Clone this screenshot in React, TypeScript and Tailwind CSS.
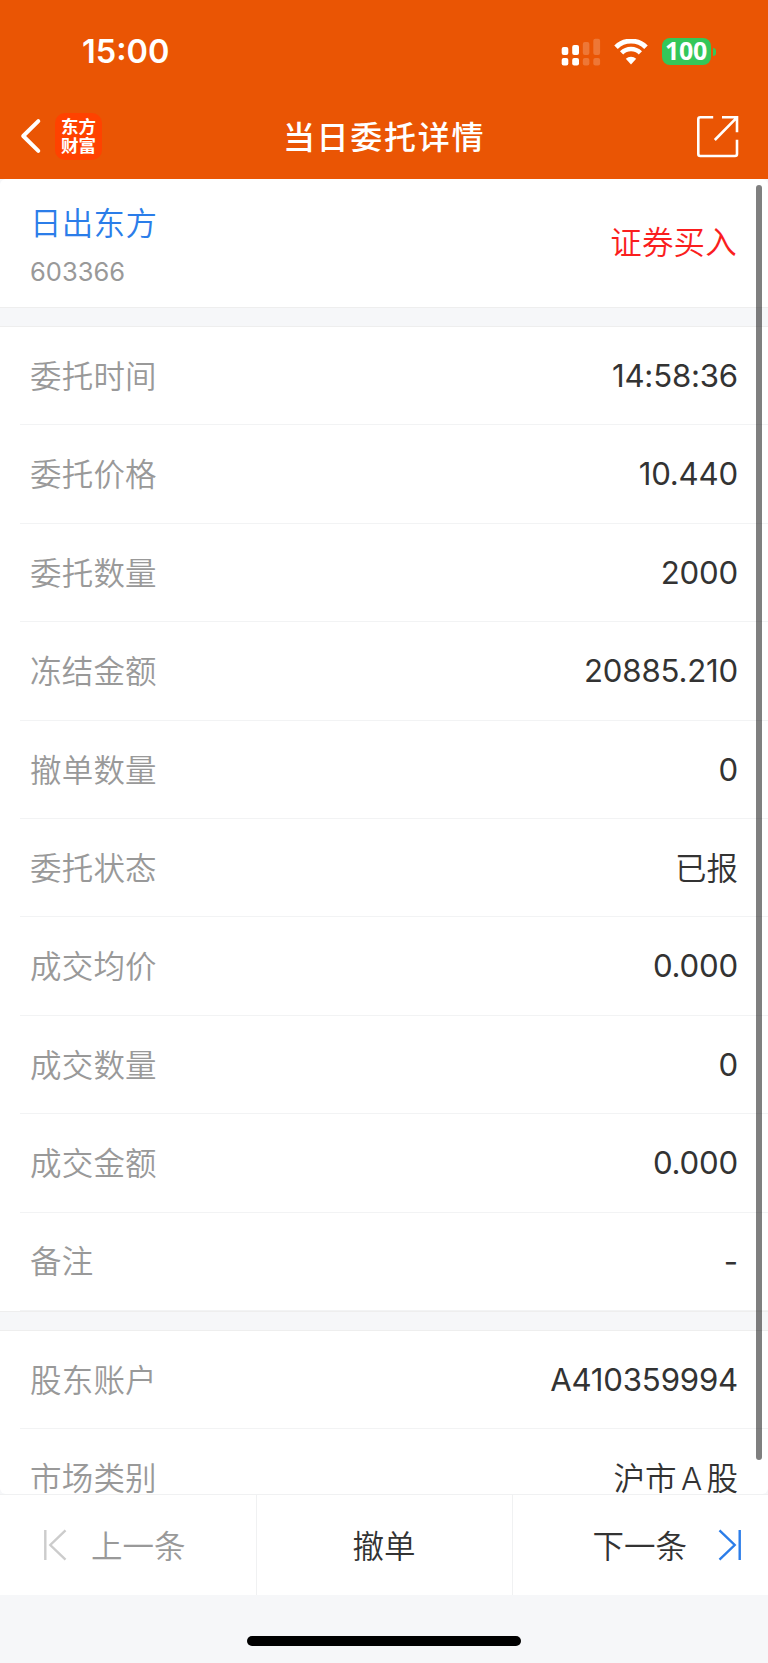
type Row = {
    label: string;
    value: string;
    isText?: boolean;
};

const orderRows: Row[] = [
    { label: "委托时间", value: "14:58:36" },
    { label: "委托价格", value: "10.440" },
    { label: "委托数量", value: "2000" },
    { label: "冻结金额", value: "20885.210" },
    { label: "撤单数量", value: "0" },
    { label: "委托状态", value: "已报", isText: true },
    { label: "成交均价", value: "0.000" },
    { label: "成交数量", value: "0" },
    { label: "成交金额", value: "0.000" },
    { label: "备注", value: "-" },
];

const accountRows: Row[] = [
    { label: "股东账户", value: "A410359994" },
    { label: "市场类别", value: "沪市 A 股", isText: true },
];

const StatusBar = () => (
    <div className="flex h-[103px] items-center justify-between pl-[82px] pr-[52px] text-white">
        <span className="pt-[2px] text-[32.5px] font-semibold leading-none">15:00</span>
        <div className="flex items-center">
            {/* Dual SIM signal */}
            <svg width="40" height="28" viewBox="0 0 40 28" fill="currentColor">
                <rect x="0.7" y="9" width="6.6" height="8" rx="2" />
                <rect x="11.2" y="7" width="6.8" height="10" rx="2" />
                <rect x="21.8" y="4" width="6.6" height="13" rx="2" opacity="0.2" />
                <rect x="32.3" y="0.8" width="6.8" height="16.2" rx="2" opacity="0.2" />
                <rect x="0.7" y="20" width="6.6" height="7.6" rx="2" />
                <rect x="11.2" y="20" width="6.8" height="7.6" rx="2" />
                <rect x="21.8" y="20" width="6.6" height="7.6" rx="2" opacity="0.2" />
                <rect x="32.3" y="20" width="6.8" height="7.6" rx="2" opacity="0.2" />
            </svg>
            {/* Wifi */}
            <svg className="ml-[13px]" width="34" height="26" viewBox="0 0 34 26" fill="none">
                <path d="M2 8.2A21.5 21.5 0 0 1 32 8.2" stroke="currentColor" strokeWidth="5" />
                <path d="M7.6 13.9A13.4 13.4 0 0 1 26.4 13.9" stroke="currentColor" strokeWidth="4.6" />
                <path d="M17 25.4 11.8 19.8A7.4 7.4 0 0 1 22.2 19.8Z" fill="currentColor" />
            </svg>
            {/* Battery */}
            <div className="ml-[14px] flex h-[27px] w-[49px] items-center justify-center rounded-[8px] bg-[#34c759] pr-px font-['Noto_Sans'] text-[25px] font-bold leading-none tracking-[-0.3px]">
                <span className="-mt-[2px]">100</span>
            </div>
            <div className="ml-[2px] h-[8px] w-[3px] rounded-r-full bg-[#34c759]" />
        </div>
    </div>
);

const NavBar = () => (
    <div className="grid h-[66px] grid-cols-[1fr_auto_1fr] items-center pl-5 pr-[29px] text-white">
        <div className="flex items-center">
            <svg width="22" height="36" viewBox="0 0 22 36" fill="none">
                <path d="M18.3 3.1 3.2 18l15.1 14.9" stroke="currentColor" strokeWidth="4" strokeLinecap="round" strokeLinejoin="round" />
            </svg>
            <div className="ml-[13px] flex h-[47px] w-[47px] flex-col items-center justify-center rounded-[10px] bg-[#ff4200] text-[17.5px] font-bold leading-[19px]">
                <span>东方</span>
                <span>财富</span>
            </div>
        </div>
        <h1 className="pl-[9px] pt-[3px] text-[32px] font-medium leading-none tracking-[1.7px]">当日委托详情</h1>
        <svg className="justify-self-end" width="43" height="43" viewBox="0 0 43 43" fill="none" stroke="currentColor" strokeWidth="2.6">
            <path d="M17.2 2.3H4.3a2 2 0 0 0-2 2V39a2 2 0 0 0 2 2H39a2 2 0 0 0 2-2V24.7" />
            <path d="M26 2.3H41V17.3M41 2.3 18.8 25" />
        </svg>
    </div>
);

const DetailRow = ({ label, value, isText }: Row) => (
    <div className="ml-5 flex h-[98.4px] shrink-0 items-center justify-between border-b border-[#f2f3f4] pl-[10px] pr-[30px] pt-[2px]">
        <span className="tracking-[0.2px] text-[#999999]">{label}</span>
        <span className={`text-[#333333] ${isText ? "[word-spacing:-4.5px]" : "text-[31.2px] font-normal tracking-[-0.2px]"}`}>
            {value}
        </span>
    </div>
);

const Divider = () => <div className="h-[20px] shrink-0 border-y border-[#eeeeee] bg-[#f6f7f9]" />;

const App = () => {
    return (
        <div className="flex h-[1663px] w-[768px] flex-col overflow-hidden bg-[#f6f7f9] font-['Inter','Noto_Sans_CJK_SC',sans-serif]">
            <header className="h-[179px] shrink-0 bg-[#ea5504]">
                <StatusBar />
                <NavBar />
            </header>

            {/* Scrollable details */}
            <main className="relative flex h-[1315px] shrink-0 flex-col overflow-hidden rounded-md bg-white text-[31.5px] font-[350] leading-none">
                <section className="flex h-[128px] shrink-0 items-center justify-between pl-[30px] pr-[31px]">
                    <div className="pt-[6px]">
                        <div className="tracking-[0.3px] text-[#2b7de9]">日出东方</div>
                        <div className="mt-[20px] text-[25.5px] font-normal text-[#999999]">603366</div>
                    </div>
                    <div className="tracking-[0.2px] text-[#fa1e1e]">证券买入</div>
                </section>
                <Divider />
                {orderRows.map((row) => (
                    <DetailRow key={row.label} {...row} />
                ))}
                <Divider />
                {accountRows.map((row) => (
                    <DetailRow key={row.label} {...row} />
                ))}
                <div className="absolute right-[6px] top-[6px] h-[1275px] w-[6px] rounded-full bg-black/50" />
            </main>

            <footer className="grid h-[101px] shrink-0 grid-cols-3 border-t border-[#f0f1f2] bg-white text-[31.5px] font-[350] leading-none text-[#333333]">
                <button className="flex items-center pl-[43px] text-[#999999]">
                    <svg width="24" height="32" viewBox="0 0 24 32" fill="none" stroke="#cccccc" strokeWidth="2.4">
                        <path d="M2.3 1v30M22.5 1.3 7.3 16l15.2 14.7" />
                    </svg>
                    <span className="ml-[24px] pt-[3px]">上一条</span>
                </button>
                <button className="flex items-center justify-center border-l border-[#f0f1f2] pr-px pt-[3px]">撤单</button>
                <button className="flex items-center justify-end border-l border-[#f0f1f2] pr-[26px]">
                    <span className="mr-[31px] pt-[3px]">下一条</span>
                    <svg width="24" height="32" viewBox="0 0 24 32" fill="none" stroke="#2b7de9" strokeWidth="2.4">
                        <path d="M21.7 1v30M1.5 1.3 16.7 16 1.5 30.7" />
                    </svg>
                </button>
            </footer>

            {/* Home indicator */}
            <div className="flex h-[68px] shrink-0 justify-center pt-[41px]">
                <div className="h-[10px] w-[274px] rounded-full bg-black" />
            </div>
        </div>
    );
};

export default App;
